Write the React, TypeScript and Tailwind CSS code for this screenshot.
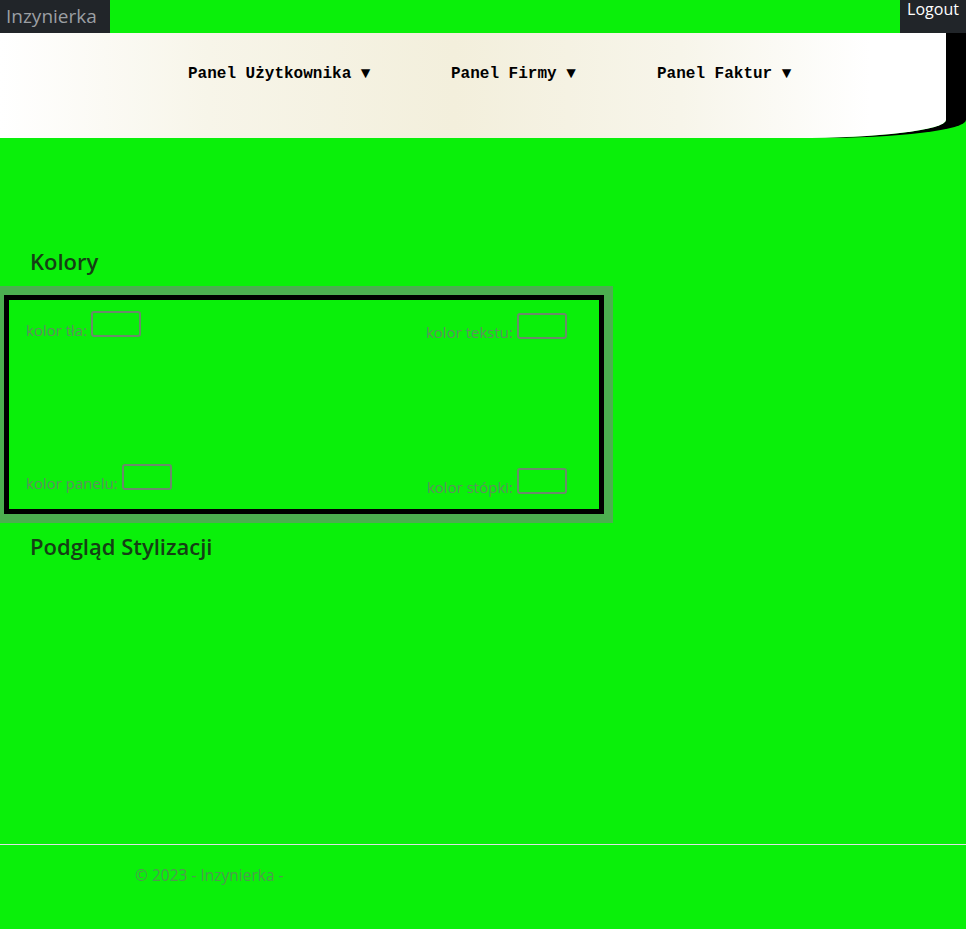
const sans = { fontFamily: '"Open Sans", "Noto Sans", sans-serif' };

function ColorField({ label, className }: { label: string; className?: string }) {
  return (
    <div className={`flex items-end ${className ?? ""}`}>
      <span className="mb-[-1px] text-[15px] leading-none text-[#5f8f5f]">{label}</span>
      <span className="ml-[4px] inline-block h-[26px] w-[50px] rounded-[3px] border-2 border-[#6b8a6b]" />
    </div>
  );
}

export default function App() {
  return (
    <div className="flex min-h-screen flex-col overflow-hidden bg-[#0af00a]" style={sans}>
      <div className="flex h-[33px] items-start justify-between">
        <div className="flex h-[33px] w-[110px] items-center bg-[#212529] pl-[6px] text-[19px] text-[#9b9fa3]">
          Inzynierka
        </div>
        <div className="flex h-[33px] w-[66px] justify-center bg-[#212529] pt-[1px] text-[16px] leading-[17px] text-white">
          Logout
        </div>
      </div>

      <nav
        className="flex h-[105px] w-[946px] items-start rounded-br-[150px_18px] bg-[linear-gradient(to_right,#ffffff_0%,#f7f5e9_22%,#f3efdc_48%,#f7f5ea_72%,#ffffff_92%)] pl-[188px] pt-[33px] shadow-[20px_0_0_#000]"
        style={{ fontFamily: '"Liberation Mono", "Courier New", monospace' }}
      >
        <span className="w-[182px] text-[16px] font-bold leading-none whitespace-nowrap text-black">Panel Użytkownika ▼</span>
        <span className="ml-[81px] w-[125px] text-[16px] font-bold leading-none whitespace-nowrap text-black">Panel Firmy ▼</span>
        <span className="ml-[81px] w-[134px] text-[16px] font-bold leading-none whitespace-nowrap text-black">Panel Faktur ▼</span>
      </nav>

      <main className="flex flex-col">
        <h2 className="mt-[110px] pl-[30px] text-[22px] font-semibold leading-[26px] text-[#153f15]">Kolory</h2>
        <div className="ml-[4px] mt-[21px] flex h-[219px] w-[600px] flex-col justify-between border-[5px] border-black pb-[15px] pl-[17px] pr-[32px] pt-[11px] outline outline-[9px] outline-[#4caf50]">
          <div className="flex items-start justify-between">
            <ColorField label="kolor tła:" />
            <ColorField label="kolor tekstu:" className="mt-[2px]" />
          </div>
          <div className="flex items-start justify-between">
            <ColorField label="kolor panelu:" />
            <ColorField label="kolor stópki:" className="mt-[4px]" />
          </div>
        </div>
        <h2 className="mt-[19px] pl-[30px] text-[22px] font-semibold leading-[26px] text-[#153f15]">Podgląd Stylizacji</h2>
      </main>

      <footer className="mt-auto mb-[24px] h-[61px] border-t border-[#dee2e6] pl-[135px] text-[15.5px] leading-[60px] text-[#4f9a4f]">
        © 2023 - Inzynierka -
      </footer>
    </div>
  );
}
